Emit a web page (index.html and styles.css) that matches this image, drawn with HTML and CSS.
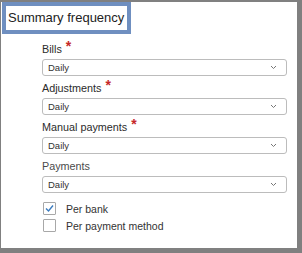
FILE: index.html
```html
<!DOCTYPE html>
<html lang="en">
<head>
    <meta charset="UTF-8">
    <meta name="viewport" content="width=device-width, initial-scale=1.0">
    <title>Summary frequency</title>
    <link rel="stylesheet" href="styles.css">
</head>
<body>
    <div class="frame">
        <div class="heading"><span>Summary frequency</span></div>

        <div class="form">
            <div class="field">
                <div class="label">Bills <span class="req">*</span></div>
                <div class="select"><span>Daily</span><svg width="7" height="5" viewBox="0 0 7 5"><path d="M1 1 L3.5 3.5 L6 1" fill="none" stroke="#777" stroke-width="1"/></svg></div>
            </div>
            <div class="field">
                <div class="label">Adjustments <span class="req">*</span></div>
                <div class="select"><span>Daily</span><svg width="7" height="5" viewBox="0 0 7 5"><path d="M1 1 L3.5 3.5 L6 1" fill="none" stroke="#777" stroke-width="1"/></svg></div>
            </div>
            <div class="field">
                <div class="label">Manual payments <span class="req">*</span></div>
                <div class="select"><span>Daily</span><svg width="7" height="5" viewBox="0 0 7 5"><path d="M1 1 L3.5 3.5 L6 1" fill="none" stroke="#777" stroke-width="1"/></svg></div>
            </div>
            <div class="field">
                <div class="label light">Payments</div>
                <div class="select"><span>Daily</span><svg width="7" height="5" viewBox="0 0 7 5"><path d="M1 1 L3.5 3.5 L6 1" fill="none" stroke="#777" stroke-width="1"/></svg></div>
            </div>

            <div class="checks">
                <div class="check">
                    <span class="box"><svg width="11" height="11" viewBox="0 0 11 11"><path d="M2 5.5 L4.5 8 L9 2.5" fill="none" stroke="#3a7bbf" stroke-width="1.4"/></svg></span>
                    <span>Per bank</span>
                </div>
                <div class="check">
                    <span class="box"></span>
                    <span>Per payment method</span>
                </div>
            </div>
        </div>
    </div>
</body>
</html>
```

FILE: styles.css
```css
body { margin: 0; font-family: 'Liberation Sans', Arial, sans-serif; color: #333; }
.frame { box-sizing: border-box; width: 302px; height: 253px; background: #fff; border-style: solid; border-color: #808080; border-width: 2px 5px 5px 1px; }
.heading { display: inline-block; border: 4px solid #6f8fc0; margin-left: 1px; padding: 0 3px 0 2px; height: 24px; line-height: 24px; font-size: 13px; color: #222; background: #fff; }
.form { padding: 8px 10px 0 41px; }
.field { margin-bottom: 5px; }
.label { font-size: 10.8px; line-height: 14px; height: 14px; margin-bottom: 3px; color: #2b2b2b; }
.label.light { color: #4a4a4a; }
.req { color: #c62828; font-size: 14px; font-weight: bold; line-height: 10px; position: relative; top: -2px; margin-left: 1px; }
.select { box-sizing: border-box; height: 17px; width: 245px; border: 1px solid #bcbcbc; border-radius: 3px; display: flex; align-items: center; justify-content: space-between; padding: 0 9px 0 5px; font-size: 9.5px; color: #333; }
.checks { padding-top: 2px; }
.check { display: flex; align-items: center; height: 17px; font-size: 10.5px; color: #333; }
.box { box-sizing: border-box; width: 13px; height: 13px; border: 1px solid #a8a8a8; border-radius: 1px; margin: 0 10px 0 1px; display: flex; align-items: center; justify-content: center; }
```
